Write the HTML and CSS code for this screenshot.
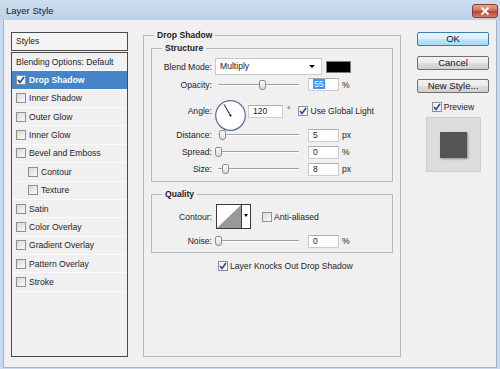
FILE: index.html
```html
<!DOCTYPE html>
<html lang="en">
<head>
  <meta charset="UTF-8">
  <title>Layer Style</title>
  <link rel="stylesheet" href="styles.css">
</head>
<body>

  <div class="window">
    <div class="titlebar">
      <span class="title">Layer Style</span>
      <span class="close">
        <svg width="10" height="8" viewBox="0 0 10 8"><path d="M1.5 0.5 L8.5 7.5 M8.5 0.5 L1.5 7.5" stroke="#fff" stroke-width="2"/></svg>
      </span>
    </div>

    <div class="dialog">

      <div class="styles-col">
        <div class="styles-head">Styles</div>
        <ul class="styles-list">
          <li>Blending Options: Default</li>
          <li class="selected"><span class="cb on"><svg width="8" height="8" viewBox="0 0 8 8"><path d="M1 4 L3 6.5 L7 1" fill="none" stroke="#23479c" stroke-width="1.6"/></svg></span>Drop Shadow</li>
          <li><span class="cb"></span>Inner Shadow</li>
          <li><span class="cb"></span>Outer Glow</li>
          <li><span class="cb"></span>Inner Glow</li>
          <li><span class="cb"></span>Bevel and Emboss</li>
          <li class="sub"><span class="cb"></span>Contour</li>
          <li class="sub"><span class="cb"></span>Texture</li>
          <li><span class="cb"></span>Satin</li>
          <li><span class="cb"></span>Color Overlay</li>
          <li><span class="cb"></span>Gradient Overlay</li>
          <li><span class="cb"></span>Pattern Overlay</li>
          <li><span class="cb"></span>Stroke</li>
        </ul>
      </div>

      <fieldset class="panel">
        <legend>Drop Shadow</legend>

        <fieldset class="group structure">
          <legend>Structure</legend>

          <div class="row blend">
            <span class="label">Blend Mode:</span>
            <span class="select">Multiply<i class="arrow"></i></span>
            <span class="swatch"></span>
          </div>

          <div class="row opacity">
            <span class="label">Opacity:</span>
            <span class="slider"><i class="thumb" style="left: 44px"></i></span>
            <span class="field"><span class="sel">55</span></span>
            <span class="unit">%</span>
          </div>

          <div class="row angle">
            <span class="label">Angle:</span>
            <svg class="dial" width="31" height="31" viewBox="0 0 31 31">
              <circle cx="15.5" cy="15.5" r="14.8" fill="#fff" stroke="#5a6a94" stroke-width="1.2"/>
              <line x1="15.5" y1="15.5" x2="9" y2="4.3" stroke="#111" stroke-width="1"/>
              <circle cx="15.5" cy="15.5" r="1.1" fill="#111"/>
            </svg>
            <span class="field wide">120</span>
            <span class="deg">&deg;</span>
            <span class="cb on"><svg width="8" height="8" viewBox="0 0 8 8"><path d="M1 4 L3 6.5 L7 1" fill="none" stroke="#23479c" stroke-width="1.6"/></svg></span>
            <span class="cb-text">Use Global Light</span>
          </div>

          <div class="row distance">
            <span class="label">Distance:</span>
            <span class="slider"><i class="thumb" style="left: 4px"></i></span>
            <span class="field">5</span>
            <span class="unit">px</span>
          </div>

          <div class="row spread">
            <span class="label">Spread:</span>
            <span class="slider"><i class="thumb" style="left: 0px"></i></span>
            <span class="field">0</span>
            <span class="unit">%</span>
          </div>

          <div class="row size">
            <span class="label">Size:</span>
            <span class="slider"><i class="thumb" style="left: 7px"></i></span>
            <span class="field">8</span>
            <span class="unit">px</span>
          </div>
        </fieldset>

        <fieldset class="group quality">
          <legend>Quality</legend>

          <div class="row contour">
            <span class="label">Contour:</span>
            <span class="contour-box">
              <svg width="24" height="23" viewBox="0 0 24 23">
                <polygon points="0,0 24,0 0,23" fill="#fff"/>
                <polygon points="24,0 24,23 0,23" fill="#999"/>
              </svg>
              <span class="contour-drop"><i class="arrow"></i></span>
            </span>
            <span class="cb"></span>
            <span class="cb-text">Anti-aliased</span>
          </div>

          <div class="row noise">
            <span class="label">Noise:</span>
            <span class="slider"><i class="thumb" style="left: 0px"></i></span>
            <span class="field">0</span>
            <span class="unit">%</span>
          </div>
        </fieldset>

        <div class="knock">
          <span class="cb on"><svg width="8" height="8" viewBox="0 0 8 8"><path d="M1 4 L3 6.5 L7 1" fill="none" stroke="#23479c" stroke-width="1.6"/></svg></span>
          <span class="cb-text">Layer Knocks Out Drop Shadow</span>
        </div>
      </fieldset>

      <div class="actions">
        <button class="btn default">OK</button>
        <button class="btn cancel">Cancel</button>
        <button class="btn new">New Style...</button>
        <div class="preview-check">
          <span class="cb on"><svg width="8" height="8" viewBox="0 0 8 8"><path d="M1 4 L3 6.5 L7 1" fill="none" stroke="#23479c" stroke-width="1.6"/></svg></span>
          <span class="cb-text">Preview</span>
        </div>
        <div class="preview">
          <div class="preview-square"></div>
        </div>
      </div>

    </div>
  </div>

</body>
</html>
```

FILE: styles.css
```css
* {
  box-sizing: border-box;
}

body {
  margin: 0;
  font-family: "Liberation Sans", Arial, sans-serif;
  font-size: 8.6px;
  color: #1e1e1e;
}

.window {
  width: 500px;
  height: 369px;
  display: flex;
  flex-direction: column;
  background: #c8daef;
  padding: 0 3px 1px;
}

.titlebar {
  height: 20px;
  margin: 0 -3px;
  padding: 0 2px 0 6px;
  display: flex;
  align-items: center;
  justify-content: space-between;
  background: linear-gradient(#cddef1, #bcd1ea);
}

.title {
  font-size: 9.5px;
  color: #1a1a1a;
}

.close {
  width: 26px;
  height: 14px;
  margin-top: 1px;
  display: flex;
  align-items: center;
  justify-content: center;
  border: 1px solid #8a3b33;
  border-radius: 3px;
  background: linear-gradient(#e6a393, #d3725f 45%, #c0402f 55%, #d4806b);
}

.dialog {
  flex: 1;
  display: flex;
  background: #f0f0f0;
  border: 1px solid #9eb4cd;
  border-top: 0;
  padding: 10px 7px;
}

/* left style list */
.styles-col {
  width: 117px;
  margin-top: 2px;
  display: flex;
  flex-direction: column;
}

.styles-head {
  height: 19px;
  border: 1px solid #4a4a4a;
  padding-left: 4px;
  line-height: 17px;
  background: #f4f4f4;
}

.styles-list {
  flex: 1;
  list-style: none;
  margin: 1px 0 0;
  padding: 0;
  border: 1px solid #4a4a4a;
}

.styles-list li {
  height: 18.36px;
  display: flex;
  align-items: center;
  gap: 3px;
  padding-left: 4px;
  border-bottom: 1px solid #fafafa;
  white-space: nowrap;
}

.styles-list li.selected {
  background: #4584c7;
  color: #fff;
  font-weight: bold;
}

.styles-list li.sub {
  padding-left: 16px;
}

/* checkboxes */
.cb {
  width: 10px;
  height: 10px;
  flex: none;
  display: inline-flex;
  align-items: center;
  justify-content: center;
  border: 1px solid #8e8f8f;
  background: linear-gradient(135deg, #d8d8d8, #fbfbfb);
}

.cb.on {
  background: #f4f4f4;
}

.cb-text {
  margin-left: 2px;
  white-space: nowrap;
}

/* main panel */
.panel {
  width: 258px;
  margin: 0 0 0 15px;
  padding: 0;
  min-width: 0;
  border: 1px solid #b9b9b9;
}

legend {
  margin-left: 10px;
  padding: 0 3px;
  font-weight: bold;
  line-height: 10px;
}

.group {
  margin: 3px 7px 0;
  padding: 0 0 6px;
  min-width: 0;
  border: 1px solid #b9b9b9;
}

.row {
  display: flex;
  align-items: center;
}

.label {
  width: 60px;
  margin-right: 3px;
  text-align: right;
  flex: none;
}

.blend {
  margin-top: 5px;
  height: 17px;
}

.select {
  position: relative;
  width: 107px;
  height: 17px;
  padding-left: 4px;
  line-height: 15px;
  background: #fff;
  border: 1px solid #c6c9cf;
}

.arrow {
  position: absolute;
  right: 6px;
  top: 6px;
  border-left: 3px solid transparent;
  border-right: 3px solid transparent;
  border-top: 3px solid #000;
}

.swatch {
  width: 25px;
  height: 12px;
  margin-left: 4px;
  background: #000;
  border: 1px solid #7c7c7c;
}

.opacity {
  margin-top: 3px;
  height: 13px;
}

.slider {
  position: relative;
  width: 87px;
  height: 12px;
}

.slider::before {
  content: "";
  position: absolute;
  left: 3px;
  right: 3px;
  top: 5px;
  border-top: 1px solid #a2a2a2;
  border-bottom: 1px solid #fff;
}

.thumb {
  position: absolute;
  top: 1px;
  width: 7px;
  height: 10px;
  border: 1px solid #8d8d8d;
  border-radius: 2px 2px 3px 3px;
  background: linear-gradient(#fdfdfd, #d9d9d9);
}

.field {
  width: 31px;
  height: 13px;
  margin-left: 6px;
  padding-left: 4px;
  line-height: 11px;
  background: #fff;
  border: 1px solid #c9ccd3;
  border-top-color: #abadb3;
}

.field.wide {
  width: 35px;
  margin-left: 2px;
}

.sel {
  background: #3399ff;
  color: #fff;
  padding: 0 1px;
}

.unit {
  margin-left: 3px;
}

.angle {
  margin-top: 9px;
  height: 22px;
}

.dial {
  align-self: flex-start;
  flex: none;
}

.deg {
  margin-left: 4px;
  align-self: flex-start;
  margin-top: 5px;
}

.angle .cb {
  margin-left: 8px;
}

.distance {
  margin-top: 7px;
  height: 12px;
}

.spread,
.size {
  margin-top: 5px;
  height: 12px;
}

.quality {
  margin-top: 7px;
  padding-bottom: 5px;
}

.contour {
  margin-top: 5px;
  height: 25px;
}

.contour-box {
  display: flex;
  width: 35px;
  height: 25px;
  margin-left: 1px;
  border: 1px solid #3a3a3a;
  background: #fff;
}

.contour-drop {
  position: relative;
  flex: 1;
  border-left: 1px solid #3a3a3a;
}

.contour-drop .arrow {
  right: 2px;
  top: 9px;
  border-width: 3px 2px 0;
}

.contour .cb {
  margin-left: 11px;
}

.noise {
  margin-top: 6px;
  height: 12px;
}

.knock {
  display: flex;
  align-items: center;
  margin: 8px 0 0 74px;
  height: 10px;
}

/* right buttons */
.actions {
  width: 72px;
  margin: 2px 0 0 16px;
  display: flex;
  flex-direction: column;
  align-items: center;
}

.btn {
  width: 72px;
  height: 14px;
  padding: 0;
  font-family: inherit;
  font-size: 9.5px;
  line-height: 12px;
  color: #111;
  border: 1px solid #707070;
  border-radius: 2px;
  background: linear-gradient(#f2f2f2 0%, #ebebeb 50%, #dddddd 51%, #cfcfcf 100%);
}

.btn.default {
  border-color: #3c7fb1;
  background: linear-gradient(#e8f5fc 0%, #d9f0fc 50%, #bee6fd 51%, #a7d9f5 100%);
}

.btn.cancel {
  margin-top: 10px;
}

.btn.new {
  margin-top: 9px;
}

.preview-check {
  display: flex;
  align-items: center;
  height: 10px;
  margin-top: 9px;
}

.preview {
  width: 55px;
  height: 55px;
  margin-top: 5px;
  display: flex;
  align-items: center;
  justify-content: center;
  background: #dcdcdc;
  border: 1px solid #cfcfcf;
}

.preview-square {
  width: 27px;
  height: 26px;
  background: #555;
  box-shadow: 1px 1px 2px rgba(0, 0, 0, 0.35);
}
```
